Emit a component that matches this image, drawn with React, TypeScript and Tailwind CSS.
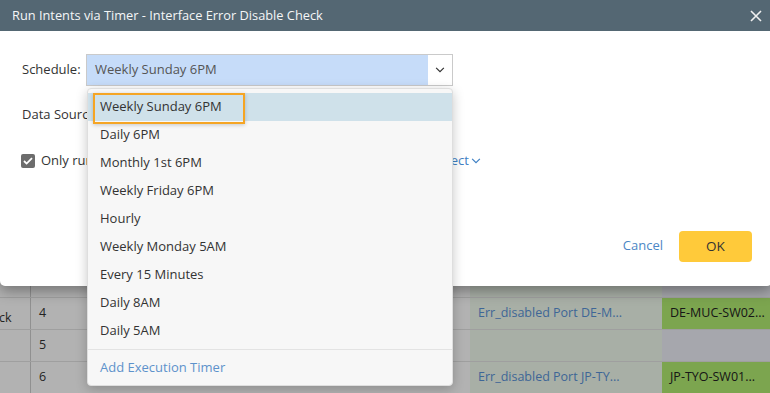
import React from "react";

const FONT = "font-['Open_Sans','Noto_Sans',sans-serif]";

const options = [
  "Weekly Sunday 6PM",
  "Daily 6PM",
  "Monthly 1st 6PM",
  "Weekly Friday 6PM",
  "Hourly",
  "Weekly Monday 5AM",
  "Every 15 Minutes",
  "Daily 8AM",
  "Daily 5AM",
];

const rows = [
  { n: "4", intent: "Err_disabled Port DE-M...", device: "DE-MUC-SW02..." },
  { n: "5", intent: "", device: "" },
  { n: "6", intent: "Err_disabled Port JP-TY...", device: "JP-TYO-SW01..." },
];

function Chevron({ className }: { className?: string }) {
  return (
    <svg width="11" height="7" viewBox="0 0 11 7" className={className} fill="none">
      <path d="M1 1l4.5 4.5L10 1" stroke="currentColor" strokeWidth="1.4" />
    </svg>
  );
}

function BackgroundTable() {
  return (
    <div className="flex flex-col bg-white">
      <div className="h-[286px]" />
      <div className="h-[12px] flex border-b border-[#e4e4e4]">
        <div className="w-[31px] border-r border-[#cfcfcf]" />
        <div className="w-[439px]" />
        <div className="w-[192px] bg-[#f1fbee]" />
        <div className="flex-1 bg-[#eef0f7]" />
      </div>
      {rows.map((r, i) => (
        <div key={i} className="h-[32px] flex border-b border-[#e4e4e4] text-[12.5px] text-[#333]">
          <div className="w-[31px] border-r border-[#cfcfcf] flex items-center">
            {i === 0 && <span className="-ml-[1px] mt-[10px] text-[#333]">ck</span>}
          </div>
          <div className="w-[60px] flex items-center pl-[8px]">{r.n}</div>
          <div className="w-[379px]" />
          <div className="w-[192px] bg-[#f1fbee] flex items-center pl-[8px] text-[#5a93d8] whitespace-nowrap">
            {r.intent}
          </div>
          <div
            className={
              r.device
                ? "flex-1 bg-[#b2ec71] flex items-center pl-[8px] text-[#222] whitespace-nowrap"
                : "flex-1 bg-[#eef0f8]"
            }
          >
            {r.device}
          </div>
        </div>
      ))}
    </div>
  );
}

export default function App() {
  return (
    <div className={`relative w-[770px] h-[393px] overflow-hidden ${FONT}`}>
      <BackgroundTable />
      {/* modal backdrop */}
      <div className="absolute inset-0 bg-black/30" />

      {/* dialog */}
      <div className="absolute left-0 top-0 w-[772px] bg-white rounded-b-[5px] shadow-[0_5px_14px_rgba(0,0,0,0.35)] flex flex-col">
        <div className="h-[31px] bg-[#546773] flex items-center justify-between pl-[12px] pr-[8px]">
          <span className="text-[12.8px] text-[#f4f6f7]">Run Intents via Timer - Interface Error Disable Check</span>
          <svg width="12" height="12" viewBox="0 0 12 12" fill="none" className="mr-[2px]">
            <path d="M1 1l10 10M11 1L1 11" stroke="#f0f0f0" strokeWidth="1.6" />
          </svg>
        </div>

        <div className="relative flex flex-col pl-[22px] pr-[20px] pt-[23px] pb-[24px] text-[13px] text-[#333]">
          <div className="h-[32px] flex items-center">
            <span className="w-[64px]">Schedule:</span>
            <div className="w-[367px] h-[32px] border border-[#cacaca] flex">
              <div className="flex-1 bg-[#c6dcf9] flex items-center pl-[8px] text-[#555]">Weekly Sunday 6PM</div>
              <div className="w-[24px] bg-white flex items-center justify-center text-[#333]">
                <Chevron className="w-[10px] h-[6px]" />
              </div>
            </div>
          </div>

          <div className="h-[32px] mt-[13px] flex items-center">
            <span className="w-[65px] whitespace-nowrap overflow-hidden">Data Source:</span>
          </div>

          <div className="h-[32px] mt-[14px] flex items-center">
            <span className="-ml-[1px] w-[14px] h-[14px] rounded-[2px] bg-[#6c6c6c] flex items-center justify-center">
              <svg width="10" height="8" viewBox="0 0 10 8" fill="none">
                <path d="M1 4l2.6 2.6L9 1.2" stroke="#fff" strokeWidth="1.8" />
              </svg>
            </span>
            {/* rest of this line is hidden behind the open menu */}
            <span className="ml-[6px] w-[46px] whitespace-nowrap overflow-hidden">Only run on devices in</span>
            <span className="ml-[346px] flex items-center text-[#3f80c4]">
              Select
              <Chevron className="ml-[2px] w-[10px] h-[6px]" />
            </span>
          </div>

          <div className="h-[32px] mt-[53px] flex items-center justify-end">
            <span className="text-[#4b87c6]">Cancel</span>
            <button className="ml-[16px] w-[73px] h-[31px] rounded-[4px] bg-[#ffca3a] text-[13.5px] text-[#333]">OK</button>
          </div>

          {/* open schedule menu */}
          <div className="absolute left-[87px] top-[57px] w-[366px] bg-[#f7f7f7] border border-[#dedede] rounded-[4px] shadow-[0_3px_12px_rgba(0,0,0,0.22)] pt-[4px] flex flex-col">
            {options.map((o, i) => (
              <div
                key={o}
                className={
                  i === 0
                    ? "relative h-[28px] flex items-center pl-[12px] bg-[#cfe1ea]"
                    : "h-[28px] flex items-center pl-[12px]"
                }
              >
                {o}
                {i === 0 && (
                  <span className="absolute left-[5px] top-0 w-[152px] h-[31px] border-2 border-[#f5a524] shadow-[0_1px_4px_rgba(0,0,0,0.2)]" />
                )}
              </div>
            ))}
            <div className="mt-[4px] border-t border-[#e3e3e3] h-[36px] flex items-center pl-[12px] text-[#5d92cb]">
              Add Execution Timer
            </div>
          </div>
        </div>
      </div>
    </div>
  );
}
